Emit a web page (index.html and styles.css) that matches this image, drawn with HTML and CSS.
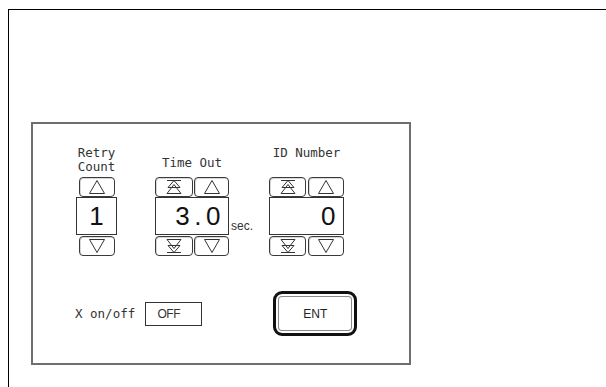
FILE: index.html
```html
<!DOCTYPE html>
<html lang="en">

<head>
    <meta charset="UTF-8">
    <meta name="viewport" content="width=device-width, initial-scale=1.0">
    <title>Communication Settings</title>
    <link rel="stylesheet" href="styles.css">
</head>

<body>

    <svg class="defs" width="0" height="0">
        <symbol id="up" viewBox="0 0 18 16">
            <polygon points="9,1.5 1.5,14.5 16.5,14.5" />
        </symbol>
        <symbol id="down" viewBox="0 0 18 16">
            <polygon points="1.5,1.5 16.5,1.5 9,14.5" />
        </symbol>
        <symbol id="fastUp" viewBox="0 0 18 16">
            <line x1="2" y1="1.5" x2="16" y2="1.5" />
            <polygon points="9,1.5 3,8.5 15,8.5" />
            <polygon points="9,5.5 2,14.5 16,14.5" />
        </symbol>
        <symbol id="fastDown" viewBox="0 0 18 16">
            <polygon points="2,1.5 16,1.5 9,10.5" />
            <polygon points="3,7.5 15,7.5 9,14.5" />
            <line x1="2" y1="14.5" x2="16" y2="14.5" />
        </symbol>
    </svg>

    <div class="screen">
        <div class="panel">

            <div class="spinners">
                <div class="field field-retry">
                    <div class="label">Retry<br>Count</div>
                    <div class="btn-row">
                        <button class="spin spin-wide"><svg><use href="#up" /></svg></button>
                    </div>
                    <div class="value-row">
                        <div class="value value-center">1</div>
                    </div>
                    <div class="btn-row btn-row-down">
                        <button class="spin spin-wide"><svg><use href="#down" /></svg></button>
                    </div>
                </div>

                <div class="field field-time">
                    <div class="label label-mid">Time Out</div>
                    <div class="btn-row">
                        <button class="spin spin-fast"><svg><use href="#fastUp" /></svg></button>
                        <button class="spin spin-step"><svg><use href="#up" /></svg></button>
                    </div>
                    <div class="value-row">
                        <div class="value">3.0</div>
                        <span class="unit">sec.</span>
                    </div>
                    <div class="btn-row btn-row-down">
                        <button class="spin spin-fast"><svg><use href="#fastDown" /></svg></button>
                        <button class="spin spin-step"><svg><use href="#down" /></svg></button>
                    </div>
                </div>

                <div class="field field-id">
                    <div class="label">ID Number</div>
                    <div class="btn-row">
                        <button class="spin spin-fast"><svg><use href="#fastUp" /></svg></button>
                        <button class="spin spin-step"><svg><use href="#up" /></svg></button>
                    </div>
                    <div class="value-row">
                        <div class="value">0</div>
                    </div>
                    <div class="btn-row btn-row-down">
                        <button class="spin spin-fast"><svg><use href="#fastDown" /></svg></button>
                        <button class="spin spin-step"><svg><use href="#down" /></svg></button>
                    </div>
                </div>
            </div>

            <div class="controls">
                <span class="xlabel">X on/off</span>
                <div class="toggle">OFF</div>
                <button class="ent">ENT</button>
            </div>

        </div>
    </div>

</body>

</html>
```

FILE: styles.css
```css
html,
body {
    margin: 0;
    height: 100%;
    overflow: hidden;
    background: #fff;
}

body {
    font-family: "DejaVu Sans Mono", monospace;
    font-size: 12.5px;
    color: #333;
}

.defs {
    position: absolute;
}

/* outer screen frame, only top and left edges are in view */
.screen {
    box-sizing: border-box;
    margin: 9px 0 0 8px;
    height: calc(100% - 9px);
    border-top: 1px solid #000;
    border-left: 1px solid #000;
    padding: 112px 0 0 22px;
}

.panel {
    box-sizing: border-box;
    width: 380px;
    height: 243px;
    border: 2px solid #6e6e6e;
    padding: 22px 0 0 43px;
}

.spinners {
    display: flex;
}

.field {
    display: flex;
    flex-direction: column;
}

.field-retry {
    width: 41px;
}

.field-time {
    width: 101px;
    margin-left: 38px;
}

.field-id {
    width: 75px;
    margin-left: 13px;
}

.label {
    height: 31px;
    line-height: 14px;
    text-align: center;
    white-space: nowrap;
}

.label-mid {
    box-sizing: border-box;
    padding-top: 10px;
    width: 74px;
}

.btn-row {
    display: flex;
    height: 20px;
    gap: 1px;
}

.field-retry .btn-row {
    justify-content: center;
}

.field-time .btn-row {
    width: 74px;
}

.field-id .btn-row {
    gap: 2px;
}

.btn-row-down {
    margin-top: 1px;
}

.spin {
    box-sizing: border-box;
    height: 20px;
    padding: 0;
    margin: 0;
    border: 1px solid #3a3a3a;
    border-radius: 4px;
    background: #fff;
    box-shadow: inset 1px 1px 0 #d8d8d8;
    display: flex;
    justify-content: center;
    align-items: center;
}

.spin svg {
    width: 18px;
    height: 16px;
    fill: none;
    stroke: #333;
    stroke-width: 1;
}

.spin-wide {
    width: 36px;
}

.field-time .spin-fast {
    width: 38px;
}

.field-time .spin-step {
    width: 35px;
}

.field-id .spin-fast {
    width: 37px;
}

.field-id .spin-step {
    width: 36px;
}

.value-row {
    display: flex;
    align-items: flex-end;
}

.value {
    box-sizing: border-box;
    height: 38px;
    border: 1px solid #333;
    padding: 1px 3px 0 0;
    font-family: "Liberation Sans", Arial, sans-serif;
    font-size: 26px;
    letter-spacing: 4.5px;
    line-height: 35px;
    color: #111;
    text-align: right;
}

.field-retry .value {
    width: 41px;
}

.field-time .value {
    width: 74px;
}

.field-id .value {
    width: 75px;
}

.value-center {
    padding-right: 0;
    letter-spacing: 0;
    text-align: center;
}

.unit {
    margin: 0 0 3px 2px;
    font-family: "Liberation Sans", Arial, sans-serif;
    font-size: 12px;
    line-height: 12px;
    color: #333;
}

.controls {
    display: flex;
    align-items: center;
    margin-top: 35px;
    margin-left: -1px;
}

.xlabel {
    white-space: nowrap;
}

.toggle {
    box-sizing: border-box;
    width: 57px;
    height: 24px;
    margin-left: 10px;
    border: 1px solid #333;
    padding-right: 10px;
    font-family: "Liberation Sans", Arial, sans-serif;
    font-size: 12px;
    letter-spacing: -0.5px;
    line-height: 22px;
    text-align: center;
}

.ent {
    box-sizing: border-box;
    width: 84px;
    height: 45px;
    margin: 0 0 0 71px;
    padding: 0;
    border: 3px solid #111;
    border-radius: 9px;
    background: #fff;
    box-shadow: inset 0 0 0 2px #fff, inset 0 0 0 3px #8a8a8a;
    font-family: "Liberation Sans", Arial, sans-serif;
    font-size: 12px;
    color: #222;
}
```
